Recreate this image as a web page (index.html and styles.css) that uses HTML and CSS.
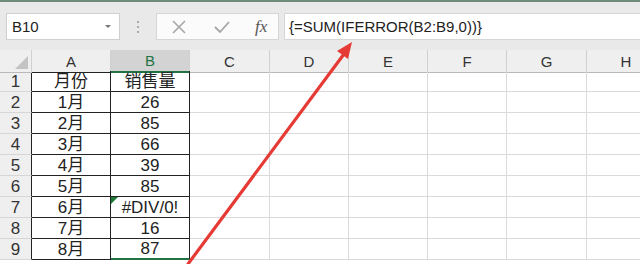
FILE: index.html
```html
<!DOCTYPE html>
<html>

<head>
  <meta name="viewport" content="width=device-width, initial-scale=1.0">
  <link rel="stylesheet" href="styles.css">
</head>

<body>
  <div class="top-line"></div>

  <div class="formula-bar">
    <div class="name-box">
      <span>B10</span>
      <span class="drop"></span>
    </div>
    <div class="dots"><i></i><i></i><i></i></div>
    <div class="buttons">
      <svg width="16" height="16" viewBox="0 0 16 16">
        <path d="M2 2 L14 14 M14 2 L2 14" stroke="#a6a6a6" stroke-width="1.6" fill="none" />
      </svg>
      <svg width="18" height="16" viewBox="0 0 18 16">
        <path d="M2 8 L7 13 L16 3" stroke="#a6a6a6" stroke-width="1.8" fill="none" />
      </svg>
      <span class="fx">fx</span>
    </div>
    <div class="formula">{=SUM(IFERROR(B2:B9,0))}</div>
  </div>

  <div class="sheet-wrap">
    <div class="sheet">
      <div class="corner"><span class="tri"></span></div>
      <div class="col-head">A</div>
      <div class="col-head sel">B</div>
      <div class="col-head">C</div>
      <div class="col-head">D</div>
      <div class="col-head">E</div>
      <div class="col-head">F</div>
      <div class="col-head">G</div>
      <div class="col-head">H</div>
    </div>
    <div class="sheet" id="rows"></div>
  </div>

  <svg class="arrow" width="640" height="264" viewBox="0 0 640 264">
    <line x1="188" y1="264" x2="344" y2="54" stroke="#e63a35" stroke-width="3.2" stroke-linecap="round" />
    <polygon points="352,42 337,51 348,59" fill="#e63a35" />
  </svg>

  <script>
    var data = [
      ["月份", "销售量"],
      ["1月", "26"],
      ["2月", "85"],
      ["3月", "66"],
      ["4月", "39"],
      ["5月", "85"],
      ["6月", "#DIV/0!"],
      ["7月", "16"],
      ["8月", "87"]
    ];
    var html = "";
    data.map((row, i) => {
      var last = i == data.length - 1;
      html += `<div class="row-head">${i + 1}</div>`;
      html += `<div class="cell boxed">${row[0]}</div>`;
      var cls = "cell boxed";
      if (row[1] == "#DIV/0!") cls += " err";
      if (last) cls += " above-active";
      html += `<div class="${cls}">${row[1]}</div>`;
      for (var c = 0; c < 6; c++) {
        html += `<div class="cell"></div>`;
      }
    });
    document.getElementById("rows").innerHTML = html;
  </script>
</body>

</html>
```

FILE: styles.css
```css
* {
  box-sizing: border-box;
}

body {
  margin: 0;
  width: 640px;
  height: 264px;
  overflow: hidden;
  background-color: white;
  font-family: "Liberation Sans", "Noto Sans CJK SC", sans-serif;
  position: relative;
}

.top-line {
  height: 2px;
  background-color: #6f8b7b;
}

.formula-bar {
  height: 48px;
  background-color: #e9e9e9;
  display: flex;
  align-items: flex-start;
  padding-top: 11px;
  padding-left: 6px;
}

.name-box {
  width: 114px;
  height: 27px;
  background-color: white;
  border: 1px solid #cfcfcf;
  display: flex;
  align-items: center;
  justify-content: space-between;
  padding: 0 8px 0 5px;
  font-size: 15px;
  color: #222;
}

.drop {
  width: 0;
  height: 0;
  border-left: 3px solid transparent;
  border-right: 3px solid transparent;
  border-top: 3px solid #777;
}

.dots {
  width: 36px;
  height: 27px;
  display: flex;
  flex-direction: column;
  align-items: center;
  justify-content: center;
  gap: 3px;
}

.dots i {
  width: 2px;
  height: 2px;
  background-color: #a9a9a9;
}

.buttons {
  width: 123px;
  height: 27px;
  background-color: #fbfbfb;
  border: 1px solid #d6d6d6;
  display: flex;
  align-items: center;
  padding-left: 14px;
  gap: 26px;
}

.fx {
  font-family: "Liberation Serif", serif;
  font-style: italic;
  font-size: 17px;
  color: #555;
  margin-left: -2px;
}

.formula {
  flex: 1;
  height: 27px;
  margin-left: 5px;
  background-color: white;
  border: 1px solid #d6d6d6;
  border-right: none;
  font-size: 15px;
  color: #222;
  line-height: 25px;
  padding-left: 4px;
}

.sheet-wrap {
  width: 640px;
  overflow: hidden;
}

.sheet {
  display: grid;
  grid-template-columns: 32px 79px 79px 80px 79px 79px 79px 80px 79px;
  grid-auto-rows: 21px;
  width: 700px;
  font-size: 17px;
  line-height: 19px;
}

.corner,
.col-head {
  height: 23px;
  background-color: #efefef;
  border-right: 1px solid #d0d0d0;
  border-bottom: 1px solid #b9b9b9;
  display: flex;
  align-items: center;
  justify-content: center;
  font-size: 15px;
  color: #333;
}

.corner {
  position: relative;
}

.tri {
  position: absolute;
  right: 3px;
  bottom: 3px;
  width: 0;
  height: 0;
  border-left: 13px solid transparent;
  border-bottom: 13px solid #c3c3c3;
}

.col-head:nth-child(2) {
  border-bottom: 1px solid #222;
}

.col-head.sel {
  background-color: #d3d3d3;
  color: #217346;
  border-bottom: 2px solid #217346;
}

.row-head {
  background-color: #efefef;
  border-right: 1px solid #222;
  border-bottom: 1px solid #d6d6d6;
  display: flex;
  align-items: flex-end;
  justify-content: center;
  color: #333;
}

.cell {
  border-right: 1px solid #dadada;
  border-bottom: 1px solid #dadada;
  display: flex;
  align-items: flex-end;
  justify-content: center;
  color: #222;
  position: relative;
}

.cell.boxed {
  border-right-color: #222;
  border-bottom-color: #222;
}

.cell.above-active {
  border-bottom: 2px solid #217346;
}

.cell.err::before {
  content: "";
  position: absolute;
  left: 0;
  top: 0;
  border-right: 7px solid transparent;
  border-top: 7px solid #1e7a36;
}

.arrow {
  position: absolute;
  left: 0;
  top: 0;
}
```
